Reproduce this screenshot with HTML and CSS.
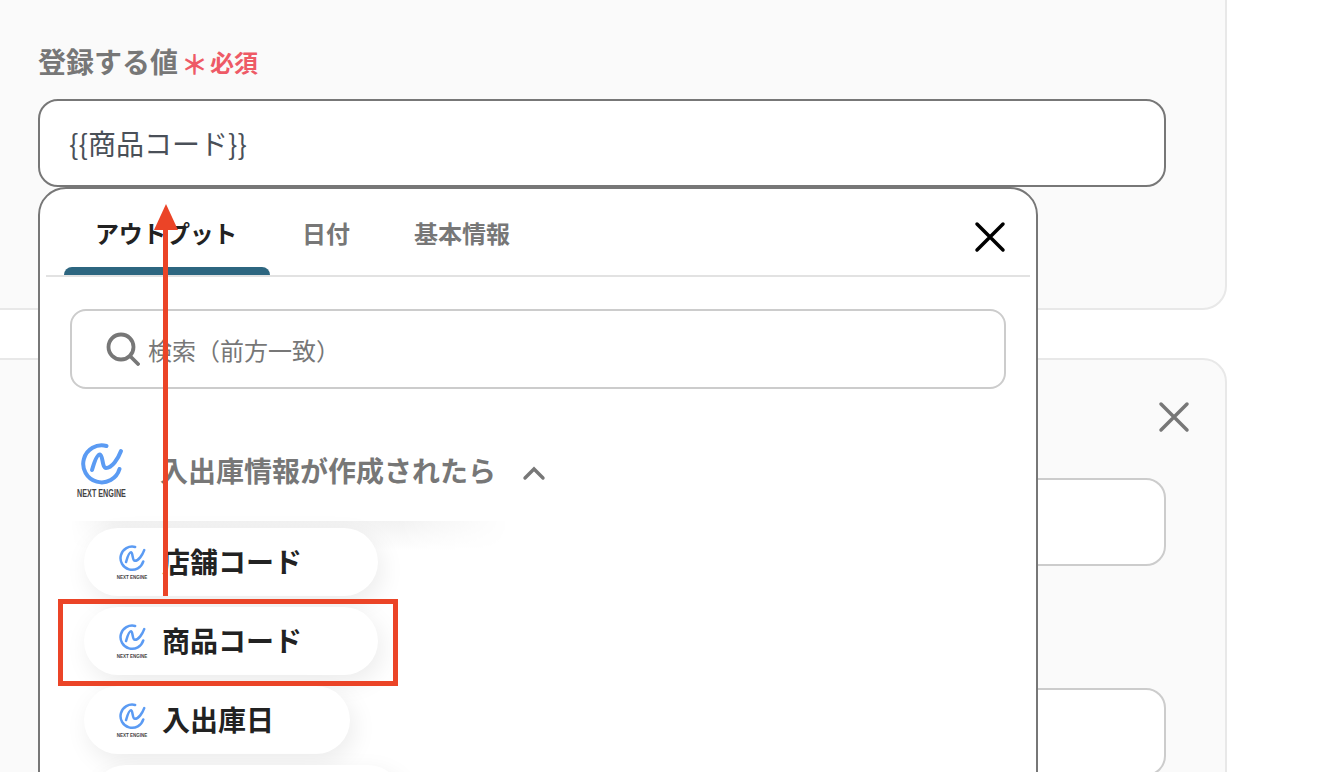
FILE: index.html
```html
<!DOCTYPE html>
<html lang="ja">

<head>
  <meta charset="UTF-8">
  <title>登録する値</title>
  <link rel="stylesheet" href="styles.css">
</head>

<body>
  <svg class="defs" width="0" height="0">
    <symbol id="ne-mark" viewBox="0 0 51 57" overflow="visible">
      <g fill="none" stroke="#5b9bf3" stroke-linecap="round" stroke-width="4">
        <path d="M30.500 3A18.500 18.500 0 1 0 43.500 26" />
        <path d="M16 27C18 20 21 11 24 11.500C27 12 26 25 30 25C36 25 42 16 45 8" />
      </g>
    </symbol>
  </svg>

  <div class="page">
    <section class="panel panel-top">
      <div class="field-label">
        <span>登録する値</span>
        <span class="req-mark">＊</span>
        <span class="req-text">必須</span>
      </div>
      <div class="text-box text-box-active">{{商品コード}}</div>
    </section>

    <section class="panel panel-bottom">
      <div class="panel-close">
        <svg width="32" height="32" viewBox="0 0 32 32">
          <path d="M3 3L29 29M29 3L3 29" stroke="#777" stroke-width="3.500" stroke-linecap="round" />
        </svg>
      </div>
      <div class="text-box text-box-first"></div>
      <div class="text-box text-box-second"></div>
    </section>
  </div>

  <div class="popup">
    <div class="tabs">
      <div class="tab tab-active">アウトプット</div>
      <div class="tab">日付</div>
      <div class="tab">基本情報</div>
      <svg class="tabs-close" width="32" height="32" viewBox="0 0 32 32">
        <path d="M3 3L29 29M29 3L3 29" stroke="#000" stroke-width="3.500" stroke-linecap="round" />
      </svg>
    </div>

    <div class="search">
      <svg width="34" height="34" viewBox="0 0 34 34">
        <circle cx="15" cy="15" r="12.500" fill="none" stroke="#777" stroke-width="3.800" />
        <path d="M24 24L32 32" stroke="#777" stroke-width="3.800" stroke-linecap="round" />
      </svg>
      <span>検索（前方一致）</span>
    </div>

    <div class="group-head">
      <svg class="logo-big" width="51" height="57" viewBox="0 0 51 57">
        <use href="#ne-mark" width="51" height="57" />
        <text transform="translate(25.500 53.500) scale(0.72 1)" text-anchor="middle" class="logo-text">NEXT ENGINE</text>
      </svg>
      <span class="group-title">入出庫情報が作成されたら</span>
      <svg class="chevron" width="24" height="16" viewBox="0 0 24 16">
        <path d="M3 13L12 4L21 13" fill="none" stroke="#777" stroke-width="3.400" stroke-linecap="round" />
      </svg>
    </div>

    <div class="pills">
      <div class="pill">
        <svg class="logo-small" width="32" height="36" viewBox="0 0 51 57">
          <use href="#ne-mark" width="51" height="57" />
          <text transform="translate(25.500 53.500) scale(0.72 1)" text-anchor="middle" class="logo-text">NEXT ENGINE</text>
        </svg>
        <span class="pill-text">店舗コード</span>
      </div>
      <div class="pill">
        <svg class="logo-small" width="32" height="36" viewBox="0 0 51 57">
          <use href="#ne-mark" width="51" height="57" />
          <text transform="translate(25.500 53.500) scale(0.72 1)" text-anchor="middle" class="logo-text">NEXT ENGINE</text>
        </svg>
        <span class="pill-text">商品コード</span>
      </div>
      <div class="pill">
        <svg class="logo-small" width="32" height="36" viewBox="0 0 51 57">
          <use href="#ne-mark" width="51" height="57" />
          <text transform="translate(25.500 53.500) scale(0.72 1)" text-anchor="middle" class="logo-text">NEXT ENGINE</text>
        </svg>
        <span class="pill-text">入出庫日</span>
      </div>
      <div class="pill pill-cut"></div>
    </div>
  </div>

  <!-- annotation over the screenshot -->
  <div class="mark-box"></div>
  <svg class="mark-arrow" width="32" height="396" viewBox="0 0 32 396">
    <path d="M16 0L28 26H4Z" fill="#eb4427" />
    <rect x="13" y="25" width="5" height="367" fill="#eb4427" />
  </svg>
</body>

</html>
```

FILE: styles.css
```css
* {
  box-sizing: border-box;
}

html,
body {
  margin: 0;
  height: 772px;
  overflow: hidden;
}

body {
  position: relative;
  background-color: #fff;
  font-family: "Noto Sans CJK JP", "Noto Sans", sans-serif;
  color: #222;
}

.defs {
  position: absolute;
}

.logo-text {
  font-family: "Liberation Sans", sans-serif;
  font-size: 10px;
  font-weight: 700;
  fill: #444;
}

.logo-big {
  margin-bottom: -3px;
}

.logo-small {
  margin-bottom: -2px;
}

.page {
  display: flex;
  flex-direction: column;
  gap: 48px;
  margin-top: -40px;
  margin-left: -30px;
  width: 1257px;
}

.panel {
  background-color: #fafafa;
  border: 2px solid #e8e8e8;
  border-radius: 24px;
  padding-left: 66px;
  padding-right: 59px;
}

.panel-top {
  height: 350px;
  padding-top: 82px;
}

.panel-bottom {
  height: 560px;
  padding-top: 41px;
}

.field-label {
  display: flex;
  align-items: center;
  height: 34px;
  font-size: 28px;
  font-weight: 700;
  color: #777;
  margin-bottom: 21px;
}

.req-mark {
  width: 26px;
  margin-left: 3px;
  margin-right: 3px;
  padding-top: 4px;
  font-size: 27px;
  color: #ee5a66;
  text-align: center;
}

.req-text {
  font-size: 24px;
  color: #ee5a66;
}

.text-box {
  height: 88px;
  background-color: #fff;
  border: 2px solid #ccc;
  border-radius: 20px;
}

.text-box-active {
  border-color: #777;
  padding: 0 29px;
  line-height: 84px;
  font-size: 28px;
  color: #4a5058;
}

.panel-close {
  display: flex;
  justify-content: flex-end;
  margin-right: -24px;
}

.text-box-first {
  margin-top: 45px;
}

.text-box-second {
  margin-top: 122px;
}

.popup {
  position: absolute;
  left: 38px;
  top: 187px;
  width: 1000px;
  height: 700px;
  background-color: #fff;
  border: 2px solid #777;
  border-radius: 28px;
}

.tabs {
  position: relative;
  display: flex;
  height: 88px;
  margin: 0 6px;
  padding-left: 18px;
  border-bottom: 2px solid #e2e2e2;
}

.tab {
  position: relative;
  padding: 26px 32px 0;
  font-size: 24px;
  font-weight: 700;
  color: #777;
}

.tab-active {
  width: 206px;
  padding-left: 31px;
  letter-spacing: -0.33px;
  color: #222;
}

.tab-active::after {
  content: "";
  position: absolute;
  left: 0;
  right: 0;
  bottom: 0;
  height: 8px;
  background-color: #2d6680;
  border-radius: 8px 8px 0 0;
}

.tabs-close {
  position: absolute;
  left: 928px;
  top: 32px;
}

.search {
  display: flex;
  align-items: center;
  gap: 8px;
  height: 80px;
  margin: 32px 30px 0;
  padding-left: 34px;
  border: 2px solid #ccc;
  border-radius: 16px;
  font-size: 24px;
  color: #777;
}

.group-head {
  display: flex;
  align-items: center;
  margin-top: 54px;
  padding-left: 36px;
}

.group-title {
  margin-left: 33px;
  font-size: 28px;
  font-weight: 700;
  color: #777;
}

.chevron {
  margin-left: 26px;
  margin-top: 5px;
}

.pills {
  position: relative;
  display: flex;
  flex-direction: column;
  align-items: flex-start;
  gap: 11px;
  margin-top: 31px;
  padding-left: 44px;
}

.pills::before {
  content: "";
  position: absolute;
  left: 30px;
  top: -7px;
  width: 440px;
  height: 30px;
  background: linear-gradient(to bottom, #f2f2f2, #fff);
  -webkit-mask-image: linear-gradient(to right, transparent, #000 10%, #000 75%, transparent);
  mask-image: linear-gradient(to right, transparent, #000 10%, #000 75%, transparent);
}

.pill {
  position: relative;
  display: flex;
  align-items: center;
  gap: 14px;
  height: 68px;
  padding: 0 76px 0 32px;
  background-color: #fff;
  border-radius: 34px;
  box-shadow: 4px 8px 24px rgba(0, 0, 0, 0.08);
  font-size: 28px;
  font-weight: 700;
}

.pill-text {
  margin-bottom: 2px;
}

.pill-cut {
  width: 310px;
  margin-left: 8px;
}

.mark-box {
  position: absolute;
  left: 58px;
  top: 599px;
  width: 340px;
  height: 87px;
  border: 5px solid #eb4427;
}

.mark-arrow {
  position: absolute;
  left: 150px;
  top: 204px;
}
```
